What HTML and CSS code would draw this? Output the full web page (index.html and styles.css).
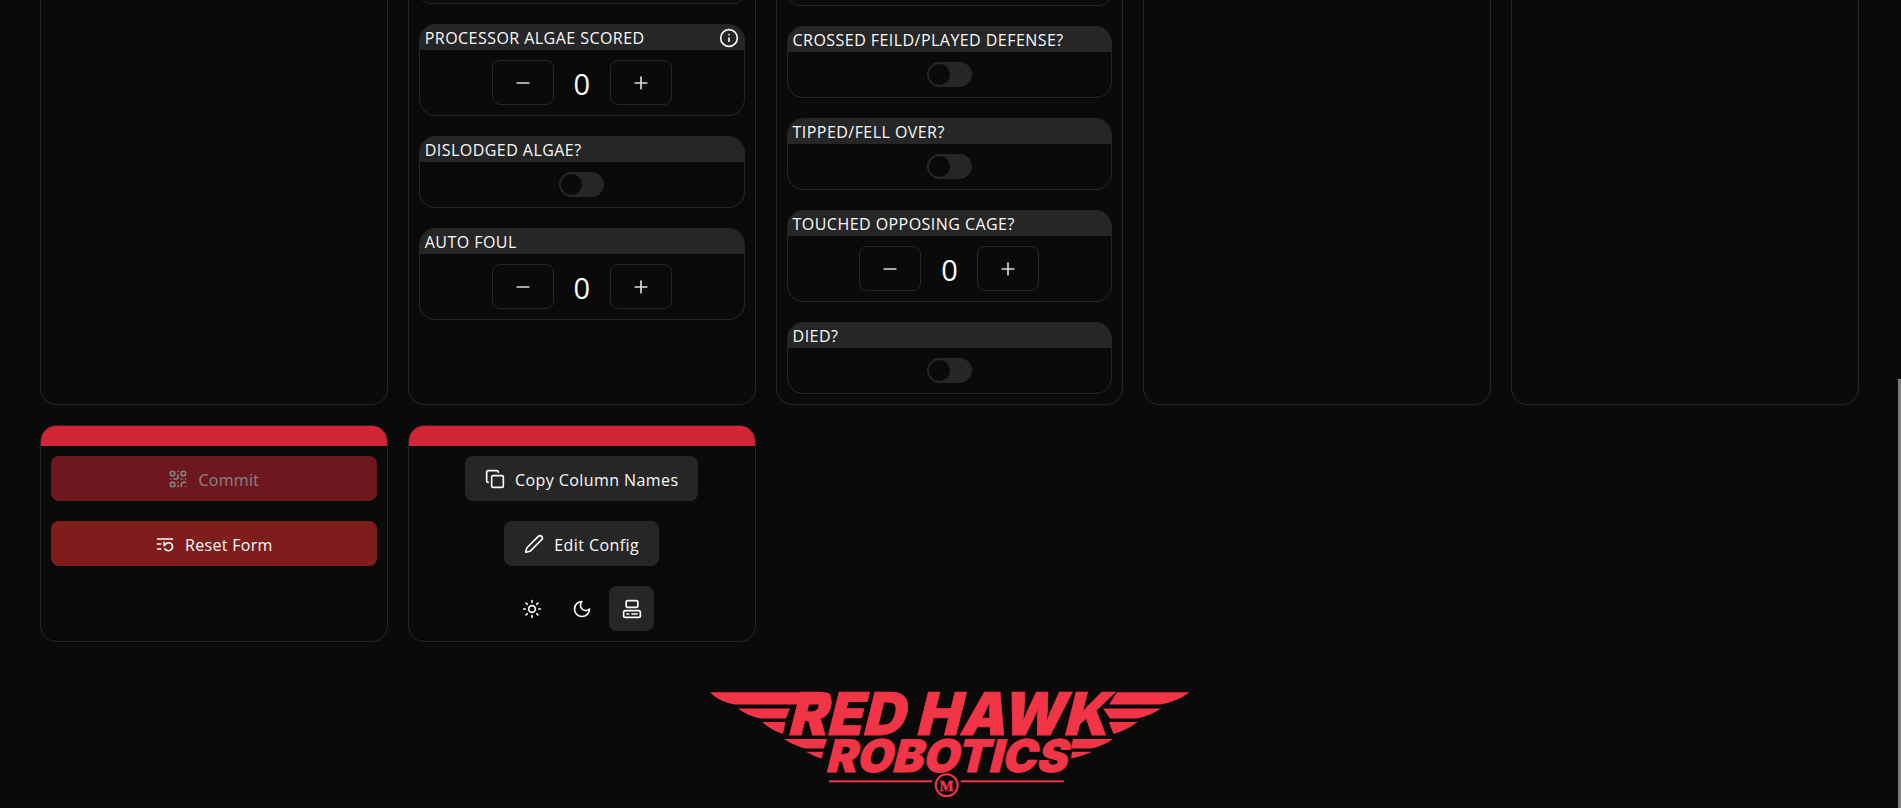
FILE: index.html
```html
<!DOCTYPE html>
<html lang="en">
<head>
  <meta charset="UTF-8" />
  <meta name="viewport" content="width=device-width, initial-scale=1.0" />
  <title>Red Hawk Robotics — Scouting</title>
  <link rel="stylesheet" href="styles.css">
</head>
<body>
  <main class="page">
    <section class="form-row form-row-top">
      <div class="col"></div>

      <div class="col">
        <div class="field stub-a"></div>

        <div class="field">
          <div class="field-head">
            <span>PROCESSOR ALGAE SCORED</span>
            <svg class="icon" viewBox="0 0 24 24"><circle cx="12" cy="12" r="10"/><path d="M12 16v-4"/><path d="M12 8h.01"/></svg>
          </div>
          <div class="field-body">
            <button class="step-btn"><svg class="icon" viewBox="0 0 24 24"><path d="M5 12h14"/></svg></button>
            <span class="step-value">0</span>
            <button class="step-btn"><svg class="icon" viewBox="0 0 24 24"><path d="M5 12h14"/><path d="M12 5v14"/></svg></button>
          </div>
        </div>

        <div class="field">
          <div class="field-head"><span>DISLODGED ALGAE?</span></div>
          <div class="field-body"><button class="switch"><span class="switch-thumb"></span></button></div>
        </div>

        <div class="field">
          <div class="field-head"><span>AUTO FOUL</span></div>
          <div class="field-body">
            <button class="step-btn"><svg class="icon" viewBox="0 0 24 24"><path d="M5 12h14"/></svg></button>
            <span class="step-value">0</span>
            <button class="step-btn"><svg class="icon" viewBox="0 0 24 24"><path d="M5 12h14"/><path d="M12 5v14"/></svg></button>
          </div>
        </div>
      </div>

      <div class="col">
        <div class="field stub-b"></div>

        <div class="field">
          <div class="field-head"><span>CROSSED FEILD/PLAYED DEFENSE?</span></div>
          <div class="field-body"><button class="switch"><span class="switch-thumb"></span></button></div>
        </div>

        <div class="field">
          <div class="field-head"><span>TIPPED/FELL OVER?</span></div>
          <div class="field-body"><button class="switch"><span class="switch-thumb"></span></button></div>
        </div>

        <div class="field">
          <div class="field-head"><span>TOUCHED OPPOSING CAGE?</span></div>
          <div class="field-body">
            <button class="step-btn"><svg class="icon" viewBox="0 0 24 24"><path d="M5 12h14"/></svg></button>
            <span class="step-value">0</span>
            <button class="step-btn"><svg class="icon" viewBox="0 0 24 24"><path d="M5 12h14"/><path d="M12 5v14"/></svg></button>
          </div>
        </div>

        <div class="field">
          <div class="field-head"><span>DIED?</span></div>
          <div class="field-body"><button class="switch"><span class="switch-thumb"></span></button></div>
        </div>
      </div>

      <div class="col"></div>
      <div class="col"></div>
    </section>

    <section class="form-row">
      <div class="panel">
        <div class="panel-bar"></div>
        <div class="panel-body">
          <button class="btn btn-wide btn-primary" disabled>
            <svg class="icon" viewBox="0 0 24 24"><rect width="5" height="5" x="3" y="3" rx="1"/><rect width="5" height="5" x="16" y="3" rx="1"/><rect width="5" height="5" x="3" y="16" rx="1"/><path d="M21 16h-3a2 2 0 0 0-2 2v3"/><path d="M21 21v.01"/><path d="M12 7v3a2 2 0 0 1-2 2H7"/><path d="M3 12h.01"/><path d="M12 3h.01"/><path d="M12 16v.01"/><path d="M16 12h1"/><path d="M21 12v.01"/><path d="M12 21v-1"/></svg>
            Commit
          </button>
          <button class="btn btn-wide btn-danger">
            <svg class="icon" viewBox="0 0 24 24"><path d="M21 6H3"/><path d="M7 12H3"/><path d="M7 18H3"/><path d="M12 18a5 5 0 0 0 9-3 4.5 4.5 0 0 0-4.5-4.5c-1.33 0-2.54.54-3.41 1.41L11 14v-4"/></svg>
            Reset Form
          </button>
        </div>
      </div>

      <div class="panel">
        <div class="panel-bar"></div>
        <div class="panel-body">
          <button class="btn btn-muted">
            <svg class="icon" viewBox="0 0 24 24"><rect width="14" height="14" x="8" y="8" rx="2"/><path d="M4 16c-1.1 0-2-.9-2-2V4c0-1.1.9-2 2-2h10c1.1 0 2 .9 2 2"/></svg>
            Copy Column Names
          </button>
          <button class="btn btn-muted">
            <svg class="icon" viewBox="0 0 24 24"><path d="M21.174 6.812a1 1 0 0 0-3.986-3.987L3.842 16.174a2 2 0 0 0-.5.83l-1.321 4.352a.5.5 0 0 0 .623.622l4.353-1.32a2 2 0 0 0 .83-.497z"/></svg>
            Edit Config
          </button>
          <div class="theme-group">
            <button class="theme-btn"><svg class="icon" viewBox="0 0 24 24"><circle cx="12" cy="12" r="4"/><path d="M12 2v2"/><path d="M12 20v2"/><path d="m4.93 4.93 1.41 1.41"/><path d="m17.66 17.66 1.41 1.41"/><path d="M2 12h2"/><path d="M20 12h2"/><path d="m6.34 17.66-1.41 1.41"/><path d="m19.07 4.93-1.41 1.41"/></svg></button>
            <button class="theme-btn"><svg class="icon" viewBox="0 0 24 24"><path d="M12 3a6 6 0 0 0 9 9 9 9 0 1 1-9-9Z"/></svg></button>
            <button class="theme-btn active"><svg class="icon" viewBox="0 0 24 24"><rect width="14" height="8" x="5" y="2" rx="2"/><rect width="20" height="8" x="2" y="14" rx="2"/><path d="M6 18h2"/><path d="M12 18h6"/></svg></button>
          </div>
        </div>
      </div>
    </section>

    <footer class="logo-wrap">
      <svg class="logo" viewBox="0 -14 490 134" width="490" height="134" role="img" aria-label="Red Hawk Robotics">
        <path d="M5 7.3H118Q127 7.3 125.500 13L123.500 19.500H30Q14 17 5 7.300Z"/>
        <path d="M33 23.500H85L81 33.500H55Q42 30.500 33 23.500Z"/>
        <path d="M57 37H80.500L78 49Q66 45 57 37Z"/>
        <path d="M79 54H122L119 63.500H100Q88 60 79 54Z"/>
        <path d="M101 66.700H118.500L116.500 73.500Q108 71 101 66.700Z"/>
        <path d="M484.500 7.300H412L404 19.500H455Q472 17 484.500 7.300Z"/>
        <path d="M456 23.500H398L405 33.500H432Q446 30.500 456 23.500Z"/>
        <path d="M432.700 37H404L408.500 49Q422 45 432.700 37Z"/>
        <path d="M408 54H368L366 63.500H387Q400 60 408 54Z"/>
        <path d="M387 66.700H367L366 73.500Q378 71 387 66.700Z"/>
        <text class="logo-big" transform="translate(82 50) skewX(-14)" textLength="320" lengthAdjust="spacingAndGlyphs">RED HAWK</text>
        <text class="logo-mid" transform="translate(120 87) skewX(-14)" textLength="241" lengthAdjust="spacingAndGlyphs">ROBOTICS</text>
        <rect x="124" y="95.300" width="103" height="2"/>
        <rect x="255.700" y="95.300" width="103" height="2"/>
        <circle class="logo-ring" cx="241.700" cy="100.300" r="11"/>
        <text class="logo-m" x="241.700" y="105.500">M</text>
      </svg>
    </footer>
  </main>

  <div class="scroll-thumb"></div>
</body>
</html>
```

FILE: styles.css
```css
:root {
  --bg: #0a0a0a;
  --ink: #fafafa;
  --line: #262626;
  --soft: #262626;
  --red: #d22535;
  --dark-red: #7f1d1d;
  --logo: #f13546;
}

* { box-sizing: border-box; }

html, body {
  height: 100%;
  overflow: hidden;
}

body {
  margin: 0;
  background: var(--bg);
  color: var(--ink);
  font-family: "Open Sans", "Noto Sans", Arial, sans-serif;
  font-size: 16px;
}

button {
  font: inherit;
  color: inherit;
  border: 0;
  padding: 0;
  background: none;
}

.page {
  padding: 0 42px 0 40px;
}

.form-row {
  display: grid;
  grid-template-columns: repeat(5, 1fr);
  gap: 20px;
  margin-bottom: 20px;
}

/* the page is scrolled down, top of the first row is above the window */
.form-row-top {
  margin-top: -30px;
}

.col {
  display: flex;
  flex-direction: column;
  gap: 20px;
  padding: 10px;
  border: 1px solid var(--line);
  border-radius: 16px;
}

.field {
  border: 1px solid var(--line);
  border-radius: 16px;
  overflow: hidden;
}

.stub-a { height: 23px; }
.stub-b { height: 25px; }

.field-head {
  height: 25px;
  padding: 2px 5px 0;
  display: flex;
  align-items: center;
  justify-content: space-between;
  background: var(--soft);
  line-height: 23px;
  letter-spacing: 0.45px;
}

.field-head .icon { margin-top: -2px; }

.field-body {
  padding: 10px;
  display: flex;
  align-items: center;
  justify-content: center;
}

.icon {
  width: 20px;
  height: 20px;
  flex: none;
  fill: none;
  stroke: currentColor;
  stroke-width: 2;
  stroke-linecap: round;
  stroke-linejoin: round;
}

.step-btn {
  width: 62px;
  height: 45px;
  display: flex;
  align-items: center;
  justify-content: center;
  border: 1px solid var(--line);
  border-radius: 8px;
  color: #dcdcdc;
}

.step-value {
  width: 56px;
  padding-top: 2px;
  text-align: center;
  font-size: 29px;
  line-height: 40px;
}

.switch {
  width: 45px;
  height: 25px;
  padding: 2px;
  display: flex;
  border-radius: 13px;
  background: var(--soft);
}

.switch-thumb {
  width: 21px;
  height: 21px;
  border-radius: 50%;
  background: var(--bg);
}

.panel {
  height: 217px;
  border: 1px solid var(--line);
  border-radius: 16px;
  overflow: hidden;
}

.panel-bar {
  height: 20px;
  background: var(--red);
}

.panel-body {
  padding: 10px;
  display: flex;
  flex-direction: column;
  align-items: center;
  gap: 20px;
}

.btn {
  height: 45px;
  padding: 2px 20px 0;
  display: flex;
  align-items: center;
  justify-content: center;
  gap: 10px;
  border-radius: 8px;
  letter-spacing: 0.3px;
}

.btn .icon { margin-top: -2px; }

.btn-wide { width: 100%; }

.btn-primary { background: var(--red); }
.btn-primary:disabled { opacity: 0.5; }
.btn-danger { background: var(--dark-red); }
.btn-muted {
  background: var(--soft);
  letter-spacing: 0.42px;
}

.theme-group {
  display: flex;
  gap: 5px;
}

.theme-btn {
  width: 45px;
  height: 45px;
  display: flex;
  align-items: center;
  justify-content: center;
  border-radius: 8px;
}

.theme-btn.active { background: var(--soft); }

.logo-wrap {
  display: flex;
  justify-content: center;
  margin-top: 29px;
}

.logo { fill: var(--logo); }

.logo-big, .logo-mid {
  font-family: Inter, "Liberation Sans", sans-serif;
  font-weight: 900;
  stroke: var(--logo);
  stroke-width: 0.8;
}

.logo-big { font-size: 59px; }
.logo-mid { font-size: 45px; }

.logo-ring {
  fill: none;
  stroke: var(--logo);
  stroke-width: 2;
}

.logo-m {
  font-family: "Liberation Serif", serif;
  font-weight: 700;
  font-size: 15px;
  text-anchor: middle;
  stroke: var(--logo);
  stroke-width: 0.4;
}

/* thin scrollbar thumb sitting at the end of the track */
.scroll-thumb {
  position: fixed;
  top: 379px;
  right: 0;
  bottom: 0;
  width: 3px;
  background: #7d7d7d;
}
```
